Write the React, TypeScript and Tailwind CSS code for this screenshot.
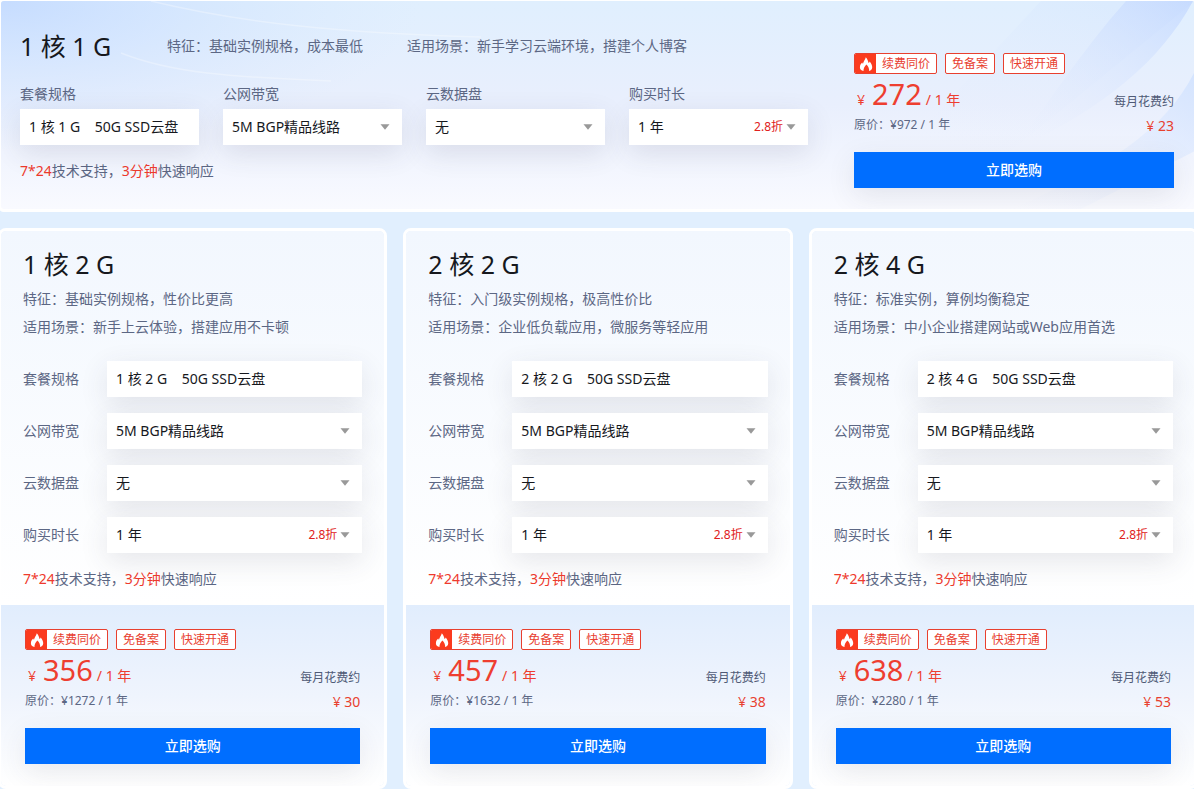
import { useId } from "react";

type Plan = {
  name: string;
  feature: string;
  scene: string;
  price: number;
  original: number;
  monthly: number;
};

const featured: Plan = {
  name: "1 核 1 G",
  feature: "基础实例规格，成本最低",
  scene: "新手学习云端环境，搭建个人博客",
  price: 272,
  original: 972,
  monthly: 23,
};

const plans: Plan[] = [
  {
    name: "1 核 2 G",
    feature: "基础实例规格，性价比更高",
    scene: "新手上云体验，搭建应用不卡顿",
    price: 356,
    original: 1272,
    monthly: 30,
  },
  {
    name: "2 核 2 G",
    feature: "入门级实例规格，极高性价比",
    scene: "企业低负载应用，微服务等轻应用",
    price: 457,
    original: 1632,
    monthly: 38,
  },
  {
    name: "2 核 4 G",
    feature: "标准实例，算例均衡稳定",
    scene: "中小企业搭建网站或Web应用首选",
    price: 638,
    original: 2280,
    monthly: 53,
  },
];

const choices = [
  { label: "公网带宽", value: "5M BGP精品线路", discount: "" },
  { label: "云数据盘", value: "无", discount: "" },
  { label: "购买时长", value: "1 年", discount: "2.8折" },
];

function Field({
  label,
  value,
  discount,
  kind,
  stacked,
}: {
  label: string;
  value: string;
  discount?: string;
  kind: "text" | "select";
  stacked: boolean;
}) {
  const id = useId();
  const control =
    "block h-9 w-full appearance-none rounded-none bg-white pl-[9px] text-sm text-[#16181d] shadow-[0_8px_28px_rgba(54,58,80,0.12)] outline-none";
  return (
    <div className={stacked ? "flex min-w-0 flex-1 flex-col gap-1" : "flex items-center"}>
      <label
        htmlFor={id}
        className={
          stacked
            ? "text-sm leading-[22px] text-[#5c6784]"
            : "w-[84px] shrink-0 text-sm leading-[22px] text-[#5c6784]"
        }
      >
        {label}
      </label>
      <div className={stacked ? "relative" : "relative min-w-0 flex-1"}>
        {kind === "text" ? (
          <input id={id} readOnly value={value} className={control + " pb-0.5"} />
        ) : (
          <select id={id} defaultValue={value} className={control}>
            <option>{value}</option>
          </select>
        )}
        {kind === "select" && (
          <span className="pointer-events-none absolute inset-y-0 right-3 flex items-center gap-[3px] text-xs text-[#e02020]">
            {discount}
            <svg viewBox="0 0 10 6" className="h-1.5 w-2.5 fill-[#999999]" aria-hidden="true">
              <path d="M0.5 0.3h9L5 5.8z" />
            </svg>
          </span>
        )}
      </div>
    </div>
  );
}

function Fields({ plan, stacked }: { plan: Plan; stacked: boolean }) {
  return (
    <div className={stacked ? "flex gap-6" : "flex flex-col gap-4"}>
      <Field
        kind="text"
        stacked={stacked}
        label="套餐规格"
        value={plan.name + "\u00a0\u00a0\u00a0 50G SSD云盘"}
      />
      {choices.map((c) => (
        <Field key={c.label} kind="select" stacked={stacked} {...c} />
      ))}
    </div>
  );
}

function Support() {
  return (
    <p className="text-sm leading-[22px] text-[#5c6784]">
      <span className="text-[#ee3a2d]">7*24</span>技术支持，
      <span className="text-[#ee3a2d]">3分钟</span>快速响应
    </p>
  );
}

function Flame() {
  return (
    <span className="flex w-[21px] items-center justify-center bg-[#fb3b1e]">
      <svg viewBox="0 0 14 16" className="h-4 w-3.5 fill-white" aria-hidden="true">
        <path d="M6.8 1.200C8.300 3 9.200 4.700 9.500 6.900c.6-.3 1-.8 1.200-1.500 1.600 1.900 2.600 4 2.500 6.200-.1 1.700-1.200 3-3.100 3.500.3-2.300-.6-4.600-2.700-6.600-1.900 1.900-3 4-2.900 6.500C2.200 14.600.900 13.200.900 11.200c0-1.900 1-3.200 2.300-4.600.2.500.4.900.8 1.200C4.300 5.300 6.300 3.900 6.800 1.200z" />
      </svg>
    </span>
  );
}

function Purchase({ plan }: { plan: Plan }) {
  const tag =
    "flex h-[21px] overflow-hidden rounded-xs border border-[#e8402f] bg-white text-xs leading-[19px] text-[#e8402f]";
  return (
    <>
      <ul className="flex gap-2">
        <li className={tag}>
          <Flame />
          <span className="px-1.5">续费同价</span>
        </li>
        <li className={tag}>
          <span className="px-1.5">免备案</span>
        </li>
        <li className={tag}>
          <span className="px-1.5">快速开通</span>
        </li>
      </ul>
      <div className="flex justify-between">
        <div>
          <p className="flex h-10 items-baseline pl-[3px] text-sm leading-10 text-[#ee3e30]">
            <span>¥</span>
            <span className="pr-1 pl-[7px] text-[29px] leading-10">{plan.price}</span>
            <span>/ 1 年</span>
          </p>
          <p className="text-xs leading-[22px] text-[#5c6784]">
            原价：¥{plan.original} / 1 年
          </p>
        </div>
        <div className="flex flex-col items-end pt-4">
          <span className="text-xs leading-6 text-[#4f5a76]">每月花费约</span>
          <span className="text-sm leading-6 text-[#e8402f]">¥ {plan.monthly}</span>
        </div>
      </div>
      <button
        type="button"
        className="mt-3.5 h-9 w-full bg-[#006eff] text-sm font-medium text-white shadow-[0_8px_28px_rgba(54,58,80,0.10)]"
      >
        立即选购
      </button>
    </>
  );
}

function FeaturedCard({ plan }: { plan: Plan }) {
  return (
    <section className="relative overflow-hidden rounded-md border-[3px] border-white bg-linear-to-b from-[#e0effe] via-[#e9effd] to-[#f9faff] pt-5 pr-[21px] pb-[21px] pl-[19px]">
      <svg
        viewBox="0 0 1194 208"
        preserveAspectRatio="none"
        className="absolute inset-0 h-full w-full"
        aria-hidden="true"
      >
        <defs>
          <radialGradient id="glow" cx="0" cy="0" r="1">
            <stop offset="0" stopColor="#c3daff" stopOpacity="0.9" />
            <stop offset="1" stopColor="#d5e7ff" stopOpacity="0" />
          </radialGradient>
          <linearGradient id="beam" x1="1" y1="0" x2="0.2" y2="1">
            <stop offset="0" stopColor="#bfd5ff" stopOpacity="0.7" />
            <stop offset="1" stopColor="#e4ecff" stopOpacity="0" />
          </linearGradient>
          <linearGradient id="edge" x1="1" y1="0" x2="0" y2="1">
            <stop offset="0" stopColor="#cfe1ff" stopOpacity="0.8" />
            <stop offset="1" stopColor="#edf2ff" stopOpacity="0" />
          </linearGradient>
        </defs>
        <rect width="420" height="150" fill="url(#glow)" />
        <path d="M150 0C240 22 340 32 480 36" fill="none" stroke="#fff" strokeOpacity="0.3" strokeWidth="1.500" />
        <path d="M120 52C170 72 230 76 330 80" fill="none" stroke="#fff" strokeOpacity="0.3" strokeWidth="1.500" />
        <path d="M1040 0H1194L1010 150H900z" fill="url(#beam)" opacity="0.3" />
        <path d="M1125 0H1192C1160 60 1100 110 1010 150 1050 100 1080 50 1125 0z" fill="url(#beam)" />
        <path d="M1194 70V150L1080 208H1010C1100 170 1165 130 1194 70z" fill="url(#edge)" />
      </svg>
      <div className="relative flex gap-[46px]">
        <div className="min-w-0 flex-1">
          <div className="flex items-center text-sm text-[#5c6784]">
            <h2 className="w-[147px] text-[25px] leading-[50px] text-[#16181d]">{plan.name}</h2>
            <p className="mr-11">特征：{plan.feature}</p>
            <p>适用场景：{plan.scene}</p>
          </div>
          <div className="mt-3 mb-[15px]">
            <Fields plan={plan} stacked />
          </div>
          <Support />
        </div>
        <div className="w-80 pt-8">
          <Purchase plan={plan} />
        </div>
      </div>
    </section>
  );
}

function PlanCard({ plan }: { plan: Plan }) {
  return (
    <section className="min-w-0 overflow-hidden rounded-lg border-[3px] border-white">
      <div className="bg-linear-to-b from-[#f2f7fe] to-white px-[22px] pt-3 pb-[15px]">
        <h2 className="text-[25px] leading-[42px] text-[#16181d]">{plan.name}</h2>
        <p className="text-sm leading-7 text-[#5c6784]">特征：{plan.feature}</p>
        <p className="text-sm leading-7 text-[#5c6784]">适用场景：{plan.scene}</p>
        <div className="mt-5 mb-[15px]">
          <Fields plan={plan} stacked={false} />
        </div>
        <Support />
      </div>
      <div className="bg-linear-to-b from-[#e1edfd] via-[#eff4fd] to-white px-6 pt-6 pb-[22px]">
        <Purchase plan={plan} />
      </div>
    </section>
  );
}

export default function App() {
  return (
    <main className="min-h-screen overflow-hidden bg-[#e1effe] font-['Noto_Sans','Noto_Sans_CJK_SC',sans-serif]">
      <div className="-mt-0.5 -mr-1 -ml-0.5 flex flex-col gap-4">
        <FeaturedCard plan={featured} />
        <div className="grid grid-cols-3 gap-4">
          {plans.map((plan) => (
            <PlanCard key={plan.name} plan={plan} />
          ))}
        </div>
      </div>
    </main>
  );
}
